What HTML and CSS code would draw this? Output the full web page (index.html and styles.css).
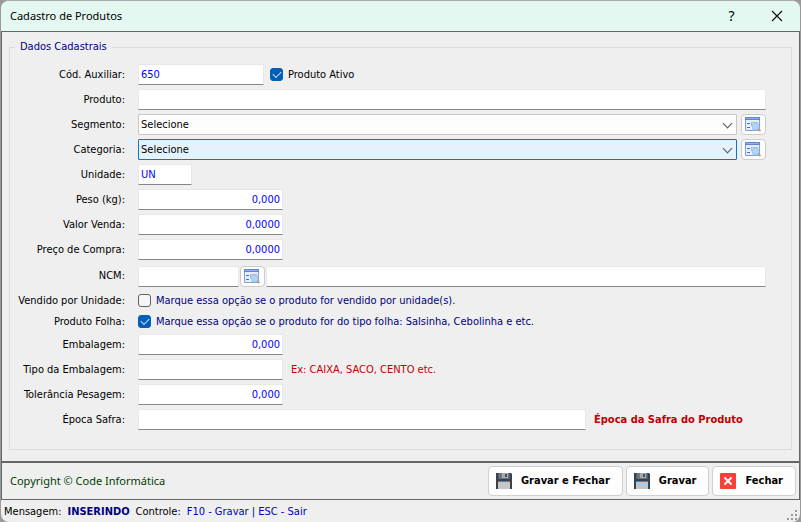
FILE: index.html
```html
<!DOCTYPE html>
<html lang="pt-BR">
<head>
<meta charset="utf-8">
<meta name="viewport" content="width=device-width, initial-scale=1">
<title>Cadastro de Produtos</title>
<link rel="stylesheet" href="styles.css">
</head>
<body>
<svg class="sprite" aria-hidden="true">
  <symbol id="lookup" viewBox="0 0 17 15">
    <path d="M0.500 1.500h14v12h-14z" fill="#e6eefb" stroke="#7f9fd6"/>
    <path d="M0 0h15v3H0z" fill="#5b87d2"/>
    <path d="M1 1.500h13" stroke="#8fb0ea"/>
    <path d="M2 6.500h3M2 10.500h3" stroke="#4272c4"/>
    <path d="M6 5h7v1H7v3H6z" fill="#b4b8c0"/>
    <path d="M6 9h5v3H6z" fill="#fff"/>
    <path d="M13 12l2.500 2" stroke="#cf9a70" stroke-width="2"/>
    <circle cx="10.500" cy="9.500" r="3.500" fill="#b0d6f7" stroke="#9cc3e8"/>
  </symbol>
  <symbol id="disk" viewBox="0 0 16 16">
    <path d="M0 0h15l1 1v15H0z" fill="#36424f"/>
    <path d="M2.500 0h11v6h-11z" fill="#6d757d"/>
    <path d="M6 0h6v5H6z" fill="#a4aaae"/>
    <path d="M9 1h2v3H9z" fill="#46515c"/>
    <path d="M2 8h12v8H2z" fill="#c1c6ca"/>
    <path d="M2 8h12v1H2z" fill="#1f8df0"/>
  </symbol>
  <symbol id="cross" viewBox="0 0 16 16">
    <rect width="16" height="16" rx="1" fill="#f44336"/>
    <path d="M4.500 4.500l7 7M11.500 4.500l-7 7" stroke="#fff" stroke-width="2"/>
  </symbol>
</svg>
<div class="window">
  <header class="titlebar">
    <h1>Cadastro de Produtos</h1>
    <button class="caption" type="button" aria-label="Ajuda">?</button>
    <button class="caption" type="button" aria-label="Fechar janela">
      <svg width="12" height="12" viewBox="0 0 12 12"><path d="M1 1l10 10M11 1L1 11" stroke="#111" stroke-width="1.200"/></svg>
    </button>
  </header>
  <form class="form" id="produto-form">
    <fieldset>
      <legend>Dados Cadastrais</legend>
      <div class="row">
        <label for="codigo">Cód. Auxiliar:</label>
        <div class="field">
          <input class="box code" id="codigo" type="text" value="650">
          <input class="check" id="ativo" type="checkbox" checked>
          <label class="option" for="ativo">Produto Ativo</label>
        </div>
      </div>
      <div class="row">
        <label for="produto">Produto:</label>
        <div class="field"><input class="box grow" id="produto" type="text"></div>
      </div>
      <div class="row">
        <label for="segmento">Segmento:</label>
        <div class="field">
          <span class="combo"><select id="segmento"><option>Selecione</option></select></span>
          <button class="lookup" type="button" aria-label="Pesquisar segmento"><svg><use href="#lookup"/></svg></button>
        </div>
      </div>
      <div class="row">
        <label for="categoria">Categoria:</label>
        <div class="field">
          <span class="combo active"><select id="categoria"><option>Selecione</option></select></span>
          <button class="lookup" type="button" aria-label="Pesquisar categoria"><svg><use href="#lookup"/></svg></button>
        </div>
      </div>
      <div class="row">
        <label for="unidade">Unidade:</label>
        <div class="field"><input class="box unit" id="unidade" type="text" value="UN"></div>
      </div>
      <div class="row">
        <label for="peso">Peso (kg):</label>
        <div class="field"><input class="box number" id="peso" type="text" value="0,000"></div>
      </div>
      <div class="row">
        <label for="venda">Valor Venda:</label>
        <div class="field"><input class="box number" id="venda" type="text" value="0,0000"></div>
      </div>
      <div class="row">
        <label for="compra">Preço de Compra:</label>
        <div class="field"><input class="box number" id="compra" type="text" value="0,0000"></div>
      </div>
      <div class="row tall">
        <label for="ncm">NCM:</label>
        <div class="field tight">
          <input class="box ncm" id="ncm" type="text">
          <button class="lookup" type="button" aria-label="Pesquisar NCM"><svg><use href="#lookup"/></svg></button>
          <input class="box grow" type="text" aria-label="Descrição do NCM">
        </div>
      </div>
      <div class="row short">
        <label for="vendido">Vendido por Unidade:</label>
        <div class="field">
          <input class="check" id="vendido" type="checkbox">
          <label class="option blue" for="vendido">Marque essa opção se o produto for vendido por unidade(s).</label>
        </div>
      </div>
      <div class="row short">
        <label for="folha">Produto Folha:</label>
        <div class="field">
          <input class="check" id="folha" type="checkbox" checked>
          <label class="option blue" for="folha">Marque essa opção se o produto for do tipo folha: Salsinha, Cebolinha e etc.</label>
        </div>
      </div>
      <div class="row">
        <label for="embalagem">Embalagem:</label>
        <div class="field"><input class="box number" id="embalagem" type="text" value="0,000"></div>
      </div>
      <div class="row">
        <label for="tipo">Tipo da Embalagem:</label>
        <div class="field">
          <input class="box number" id="tipo" type="text">
          <span class="hint">Ex: CAIXA, SACO, CENTO etc.</span>
        </div>
      </div>
      <div class="row">
        <label for="tolerancia">Tolerância Pesagem:</label>
        <div class="field"><input class="box number" id="tolerancia" type="text" value="0,000"></div>
      </div>
      <div class="row">
        <label for="safra">Época Safra:</label>
        <div class="field">
          <input class="box grow" id="safra" type="text">
          <strong class="hint season">Época da Safra do Produto</strong>
        </div>
      </div>
    </fieldset>
  </form>
  <footer class="actions">
    <p>Copyright © Code Informática</p>
    <button type="submit" form="produto-form"><svg><use href="#disk"/></svg>Gravar e Fechar</button>
    <button type="button"><svg><use href="#disk"/></svg>Gravar</button>
    <button type="button"><svg><use href="#cross"/></svg>Fechar</button>
  </footer>
  <div class="status">
    <span>Mensagem:</span>
    <strong>INSERINDO</strong>
    <span>Controle:</span>
    <span class="keys">F10 - Gravar | ESC - Sair</span>
    <svg class="grip" width="12" height="12" viewBox="0 0 12 12"><path d="M8 0h2v2H8zM4 4h2v2H4zM8 4h2v2H8zM0 8h2v2H0zM4 8h2v2H4zM8 8h2v2H8z" fill="#999"/></svg>
  </div>
</div>
</body>
</html>
```
FILE: styles.css
```css
* { box-sizing: border-box; }

body {
  margin: 0;
  background: #999;
  font: 11px/16px "DejaVu Sans Condensed", "Noto Sans", sans-serif;
  color: #000;
}

input, select, button { font: inherit; margin: 0; }

.sprite { position: absolute; width: 0; height: 0; }

.window {
  display: flex;
  flex-direction: column;
  min-height: 100vh;
  margin: 0 1px;
  border-top: 1px solid #aaa;
  border-radius: 8px;
  background: #efefef;
  overflow: hidden;
}

.titlebar {
  display: flex;
  align-items: center;
  height: 31px;
  padding: 0 1px 0 9px;
  background: #e4f8f2;
  border-bottom: 1px solid #666;
}

.titlebar h1 {
  flex: 1;
  margin: 0;
  font: 11px/16px "Noto Sans", sans-serif;
}

.caption {
  display: grid;
  place-items: center;
  width: 45px;
  height: 28px;
  padding: 0;
  border: 0;
  background: none;
  font: 14px/16px "Noto Sans", sans-serif;
  color: #000;
}

.form {
  flex: 1;
  padding: 7px;
  padding-bottom: 11px;
  border: solid #666;
  border-width: 0 1px;
}

fieldset {
  min-width: 0;
  margin: 0;
  padding: 7px 25px 17px 0;
  border: 1px solid #dcdcdc;
}

legend {
  margin-left: 5px;
  padding: 0 5px;
  color: #000080;
}

.row {
  display: grid;
  grid-template-columns: 115px 1fr;
  column-gap: 13px;
  align-items: center;
  height: 25px;
}

.row.tall { height: 28px; }
.row.short { height: 21px; }
.row > label { text-align: right; white-space: nowrap; }

.field {
  display: flex;
  align-items: center;
  gap: 4px;
  min-width: 0;
}

.field.tight { gap: 1px; }

.box {
  height: 21px;
  padding: 0 2px;
  border: 1px solid #e8e8e8;
  border-bottom-color: #868686;
  border-radius: 1px;
  background: #fff;
  color: #00f;
}

.grow { flex: 1; min-width: 0; }
.code { width: 126px; margin-right: 2px; }
.unit { width: 54px; }
.number { width: 145px; text-align: right; }
.ncm { width: 101px; }

.check {
  appearance: none;
  display: grid;
  place-items: center;
  width: 13px;
  height: 13px;
  border: 1px solid #626262;
  border-radius: 3px;
  background: #f6f6f6;
}

.check:checked { border-color: #005fb8; background: #005fb8; }

.check:checked::before {
  content: "";
  width: 7px;
  height: 4px;
  margin-bottom: 2px;
  border: solid #cfe2f3;
  border-width: 0 0 1px 1px;
  transform: rotate(-45deg);
}

.option { margin-left: 1px; }
.blue { color: #000080; }

.combo {
  position: relative;
  flex: 1;
  display: flex;
}

.combo::after {
  content: "";
  position: absolute;
  top: 6px;
  right: 6px;
  width: 6px;
  height: 6px;
  border: solid #555;
  border-width: 0 1px 1px 0;
  transform: rotate(45deg);
  pointer-events: none;
}

.combo select {
  appearance: none;
  width: 100%;
  height: 21px;
  padding: 0 18px 0 2px;
  border: 1px solid #c8c8c8;
  border-radius: 1px;
  background: #fdfdfd;
  color: #000;
}

.combo.active select { border-color: #0078d4; background: #e5f1fb; }

.lookup {
  display: grid;
  place-items: center;
  width: 25px;
  height: 21px;
  padding: 0;
  border: 1px solid #ccc;
  border-radius: 4px;
  background: #fdfdfd;
}

.lookup svg { width: 17px; height: 15px; }

.hint { margin-left: 4px; color: #c00000; white-space: nowrap; }
.season { min-width: 172px; }

.actions {
  display: flex;
  align-items: center;
  gap: 3px;
  height: 39px;
  padding: 0 3px 0 8px;
  border: 1px solid #666;
  border-top-width: 2px;
}

.actions p {
  flex: 1;
  margin: 0;
  font: 11px/16px "Noto Sans", sans-serif;
  color: #004000;
}

.actions button {
  display: flex;
  align-items: center;
  gap: 9px;
  height: 30px;
  padding: 0 12px 0 7px;
  border: 1px solid #d0d0d0;
  border-radius: 4px;
  background: #fdfdfd;
  font-weight: bold;
  color: #000;
}

.actions svg { width: 16px; height: 16px; }

.status {
  display: flex;
  align-items: center;
  gap: 6px;
  height: 22px;
  padding: 2px 1px 0 3px;
}

.status strong { color: #000080; }
.keys { color: #0000c0; }
.grip { align-self: flex-end; margin-left: auto; }
```
